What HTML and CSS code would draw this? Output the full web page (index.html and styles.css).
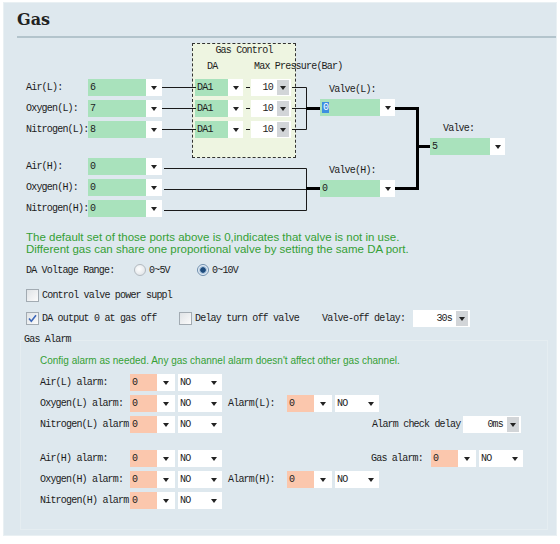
FILE: index.html
```html
<!DOCTYPE html>
<html lang="en">
<head>
    <meta charset="UTF-8">
    <meta name="viewport" content="width=device-width, initial-scale=1.0">
    <title>Gas</title>
    <link rel="stylesheet" href="styles.css">
</head>
<body>

<div class="panel">
    <h1 class="title">Gas</h1>

    <div class="diagram">
        <div class="ports">
            <div class="port"><span class="lbl">Air(L):</span><div class="sel gr w-port"><span class="v">6</span><span class="arr"></span></div></div>
            <div class="port"><span class="lbl">Oxygen(L):</span><div class="sel gr w-port"><span class="v">7</span><span class="arr"></span></div></div>
            <div class="port"><span class="lbl">Nitrogen(L):</span><div class="sel gr w-port"><span class="v">8</span><span class="arr"></span></div></div>
            <div class="port first-h"><span class="lbl">Air(H):</span><div class="sel gr w-port"><span class="v">0</span><span class="arr"></span></div></div>
            <div class="port"><span class="lbl">Oxygen(H):</span><div class="sel gr w-port"><span class="v">0</span><span class="arr"></span></div></div>
            <div class="port"><span class="lbl">Nitrogen(H):</span><div class="sel gr w-port"><span class="v">0</span><span class="arr"></span></div></div>
        </div>

        <div class="gasctl">
            <div class="gc-title">Gas Control</div>
            <div class="gc-head"><span class="h-da">DA</span><span class="h-mp">Max Pressure(Bar)</span></div>
            <div class="gc-rows">
                <div class="gc-row">
                    <div class="sel gr w-da"><span class="v">DA1</span><span class="arr"></span></div>
                    <div class="sel num w-mp"><span class="v">10</span><span class="btn"></span></div>
                </div>
                <div class="gc-row">
                    <div class="sel gr w-da"><span class="v">DA1</span><span class="arr"></span></div>
                    <div class="sel num w-mp"><span class="v">10</span><span class="btn"></span></div>
                </div>
                <div class="gc-row">
                    <div class="sel gr w-da"><span class="v">DA1</span><span class="arr"></span></div>
                    <div class="sel num w-mp"><span class="v">10</span><span class="btn"></span></div>
                </div>
            </div>
        </div>

        <div class="valve valve-l">
            <div class="vlbl">Valve(L):</div>
            <div class="sel gr w-valve"><span class="v"><span class="hl">0</span></span><span class="arr"></span></div>
        </div>
        <div class="valve valve-h">
            <div class="vlbl">Valve(H):</div>
            <div class="sel gr w-valve"><span class="v">0</span><span class="arr"></span></div>
        </div>
        <div class="valve valve-m">
            <div class="vlbl">Valve:</div>
            <div class="sel gr w-valve"><span class="v">5</span><span class="arr"></span></div>
        </div>

        <!-- pipes between the ports -->
        <svg class="wires" width="540" height="185" viewBox="0 0 540 185">
            <g stroke="#1a1a1a" stroke-width="1" fill="none">
                <path d="M145 49.5H179M145 70.5H179M145 91.5H179"/>
                <path d="M229 49.5H233M229 70.5H233M229 91.5H233"/>
                <path d="M275 49.5H289.5V91.5H275M275 70.5H289"/>
                <path d="M147 130.5H289.5V172.5H147M147 151.5H289"/>
            </g>
            <g stroke="#000" stroke-width="3" fill="none">
                <path d="M289 70.5H303"/>
                <path d="M289 150.5H303"/>
                <path d="M378 70.5H400.5V150.5H378M400 108.5H413"/>
            </g>
        </svg>
    </div>

    <p class="note">The default set of those ports above is 0,indicates that valve is not in use.<br>Different gas can share one proportional valve by setting the same DA port.</p>

    <div class="opt range">
        <span class="range-lbl">DA Voltage Range:</span>
        <label class="rad w-r1"><span class="radio"></span>0~5V</label>
        <label class="rad"><span class="radio on"></span>0~10V</label>
    </div>

    <div class="opt chk-row1">
        <label class="chk"><span class="box"></span>Control valve power suppl</label>
    </div>

    <div class="opt chk-row2">
        <label class="chk w-c1"><span class="box"><svg width="11" height="11" viewBox="0 0 11 11"><path d="M2 5.5L4.3 8.2L9 2.3" stroke="#3b66b8" stroke-width="1.6" fill="none"/></svg></span>DA output 0 at gas off</label>
        <label class="chk w-c2"><span class="box"></span>Delay turn off valve</label>
        <span class="w-vd">Valve-off delay:</span>
        <div class="sel num w-num"><span class="v">30s</span><span class="btn"></span></div>
    </div>

    <fieldset class="alarms">
        <legend>Gas Alarm</legend>
        <div class="al-inner">
            <p class="note al-note">Config alarm as needed. Any gas channel alarm doesn't affect other gas channel.</p>

            <div class="arow">
                <span class="alb">Air(L) alarm:</span>
                <div class="sel sal"><span class="v">0</span><span class="arr"></span></div>
                <div class="sel no"><span class="v">NO</span><span class="arr"></span></div>
            </div>
            <div class="arow">
                <span class="alb">Oxygen(L) alarm:</span>
                <div class="sel sal"><span class="v">0</span><span class="arr"></span></div>
                <div class="sel no"><span class="v">NO</span><span class="arr"></span></div>
                <span class="grp-lbl">Alarm(L):</span>
                <div class="sel sal"><span class="v">0</span><span class="arr"></span></div>
                <div class="sel no"><span class="v">NO</span><span class="arr"></span></div>
            </div>
            <div class="arow">
                <span class="alb">Nitrogen(L) alarm</span>
                <div class="sel sal"><span class="v">0</span><span class="arr"></span></div>
                <div class="sel no"><span class="v">NO</span><span class="arr"></span></div>
                <span class="delay-lbl">Alarm check delay</span>
                <div class="sel num w-num2"><span class="v">0ms</span><span class="btn"></span></div>
            </div>

            <div class="arow first-h">
                <span class="alb">Air(H) alarm:</span>
                <div class="sel sal"><span class="v">0</span><span class="arr"></span></div>
                <div class="sel no"><span class="v">NO</span><span class="arr"></span></div>
                <span class="gas-lbl">Gas alarm:</span>
                <div class="sel sal"><span class="v">0</span><span class="arr"></span></div>
                <div class="sel no"><span class="v">NO</span><span class="arr"></span></div>
            </div>
            <div class="arow">
                <span class="alb">Oxygen(H) alarm:</span>
                <div class="sel sal"><span class="v">0</span><span class="arr"></span></div>
                <div class="sel no"><span class="v">NO</span><span class="arr"></span></div>
                <span class="grp-lbl">Alarm(H):</span>
                <div class="sel sal"><span class="v">0</span><span class="arr"></span></div>
                <div class="sel no"><span class="v">NO</span><span class="arr"></span></div>
            </div>
            <div class="arow">
                <span class="alb">Nitrogen(H) alarm</span>
                <div class="sel sal"><span class="v">0</span><span class="arr"></span></div>
                <div class="sel no"><span class="v">NO</span><span class="arr"></span></div>
            </div>
        </div>
    </fieldset>
</div>

</body>
</html>
```

FILE: styles.css
```css
* {
    box-sizing: border-box;
}
body {
    margin: 0;
    background: #fff;
    font-family: "Liberation Mono", monospace;
    font-size: 10px;
    letter-spacing: -0.8px;
    color: #1c1c1c;
}
.panel {
    margin: 2px 0 0 3px;
    width: 554px;
    height: 534px;
    background: #dee8ee;
    border: 1px solid #e9f0f3;
    padding: 7px 0 0 13px;
}
.title {
    margin: 0;
    height: 28px;
    font: bold 16px/20px "DejaVu Serif", serif;
    letter-spacing: 0;
    color: #222;
    border-bottom: 2px solid #b3c4cc;
}

/* diagram */
.diagram {
    position: relative;
    height: 185px;
}
.ports {
    padding: 41px 0 0 9px;
    display: flex;
    flex-direction: column;
    gap: 4px;
}
.port {
    display: flex;
    align-items: center;
    height: 17px;
}
.port.first-h {
    margin-top: 16px;
}
.port .lbl {
    width: 62px;
}

/* select boxes */
.sel {
    display: flex;
    height: 17px;
    line-height: 17px;
    flex: none;
}
.sel .v {
    padding-left: 2px;
    white-space: nowrap;
}
.sel .arr {
    position: relative;
    background: #fff;
}
.sel .arr::after,
.sel .btn::after {
    content: "";
    position: absolute;
    left: 50%;
    top: 7px;
    margin-left: -3px;
    border-left: 3px solid transparent;
    border-right: 3px solid transparent;
    border-top: 4px solid #222;
}
.sel.gr .v {
    background: #a9e2bc;
}
.w-port .v { width: 58px; }
.w-port .arr { width: 16px; }
.w-da .v { width: 33px; }
.w-da .arr { width: 15px; }
.w-valve .v { width: 60px; }
.w-valve .arr { width: 15px; }

.sel.num {
    background: #fff;
    padding: 1px 2px 1px 0;
    line-height: 15px;
}
.sel.num .v {
    text-align: right;
    padding-right: 4px;
}
.sel.num .btn {
    position: relative;
    width: 12px;
    background: #d2d5d8;
}
.sel.num .btn::after {
    top: 6px;
}
.w-mp .v { width: 26px; }
.w-num .v { width: 43px; }
.w-num2 .v { width: 44px; }

.sel.sal {
    margin-right: 3px;
}
.sel.sal .v {
    width: 27px;
    background: #fbc7ad;
}
.sel.sal .arr {
    width: 18px;
}
.sel.no .v {
    width: 28px;
    background: #fff;
}
.sel.no .arr {
    width: 16px;
}

.hl {
    background: #3d8fe0;
    color: #fff;
    padding: 0 1px;
}

/* gas control box */
.gasctl {
    position: absolute;
    left: 175px;
    top: 5px;
    width: 104px;
    height: 115px;
    border: 1px dashed #333;
    background: #eef5e1;
}
.gc-title {
    height: 14px;
    line-height: 14px;
    text-align: center;
}
.gc-head {
    display: flex;
    margin-top: 2px;
    height: 14px;
    line-height: 14px;
    padding-left: 14px;
    white-space: nowrap;
}
.h-da {
    width: 47px;
    flex: none;
}
.gc-rows {
    margin-top: 5px;
    padding-left: 2px;
    display: flex;
    flex-direction: column;
    gap: 4px;
}
.gc-row {
    display: flex;
    gap: 8px;
}

.valve {
    position: absolute;
}
.valve .vlbl {
    height: 16px;
    line-height: 14px;
    padding-left: 9px;
}
.valve-l { left: 303px; top: 45px; }
.valve-h { left: 303px; top: 126px; }
.valve-m { left: 413px; top: 84px; }
.valve-m .vlbl { padding-left: 13px; }

.wires {
    position: absolute;
    left: 0;
    top: 0;
    pointer-events: none;
}

/* notes and options */
.note {
    margin: 8px 0 0 9px;
    font: 11.5px/12px "Liberation Sans", sans-serif;
    letter-spacing: 0;
    color: #35a035;
}
.opt {
    display: flex;
    align-items: center;
    margin-left: 9px;
}
.range {
    margin-top: 8px;
    height: 14px;
}
.range-lbl {
    width: 108px;
}
.rad {
    display: flex;
    align-items: center;
}
.w-r1 {
    width: 63px;
}
.radio {
    width: 12px;
    height: 12px;
    margin-right: 3px;
    border-radius: 50%;
    border: 1px solid #b3bac0;
    background: radial-gradient(circle at 40% 40%, #fff, #d9dee2);
}
.radio.on {
    border-color: #6f8fae;
    background: radial-gradient(circle, #1f4c7c 0 2.4px, #8fb0cf 3px, #e6eef6 4.5px, #fff 100%);
}
.chk-row1 {
    margin-top: 10px;
    height: 16px;
}
.chk-row2 {
    margin-top: 7px;
    height: 17px;
}
.chk {
    display: flex;
    align-items: center;
}
.box {
    width: 13px;
    height: 13px;
    margin-right: 3px;
    border: 1px solid #a2abb2;
    background: linear-gradient(135deg, #dfe3e6, #fbfbfb);
}
.box svg {
    display: block;
}
.w-c1 { width: 153px; }
.w-c2 { width: 143px; }
.w-vd { width: 91px; }

/* alarm block */
.alarms {
    margin: 6px 8px 0 3px;
    padding: 0 0 16px 3px;
    border: 1px solid #e5edf1;
}
.alarms legend {
    padding: 0;
    line-height: 14px;
}
.al-inner {
    padding-left: 16px;
}
.al-note {
    margin: 8px 0 7px 0;
    font-size: 10px;
}
.arow {
    display: flex;
    align-items: center;
    height: 17px;
    margin-bottom: 4px;
}
.arow.first-h {
    margin-top: 17px;
}
.alb {
    width: 90px;
}
.grp-lbl {
    margin-left: 6px;
    width: 59px;
}
.delay-lbl {
    margin-left: 150px;
    width: 91px;
}
.gas-lbl {
    margin-left: 149px;
    width: 60px;
}
```
